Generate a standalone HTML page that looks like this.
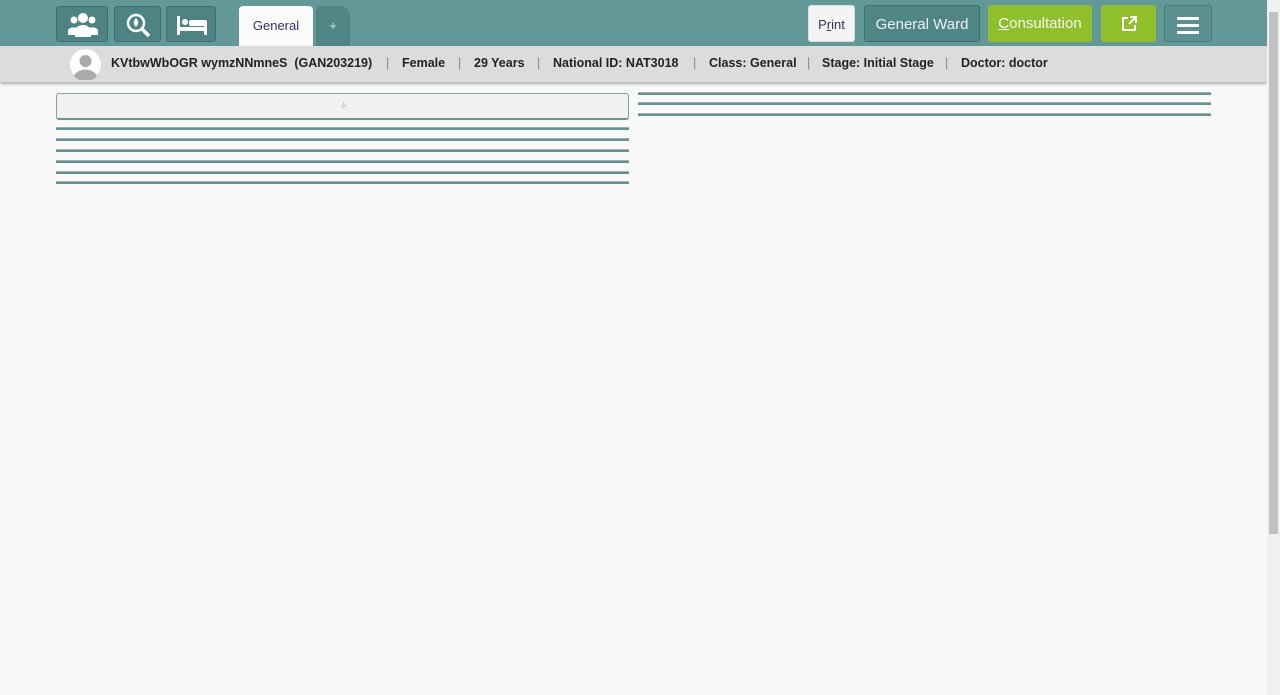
<!DOCTYPE html>
<html><head><style>
*{box-sizing:border-box;margin:0;padding:0}
body{width:1280px;height:695px;overflow:hidden;background:#f9f9f9;font-family:"Liberation Sans",sans-serif;position:relative}
.top{position:absolute;left:0;top:0;width:1267px;height:46px;background:#639898}
.ib{position:absolute;top:6px;width:52px;height:36px;background:#4e8383;border:1px solid #3f7070;border-radius:3px}
.tab{position:absolute;top:6px;height:40px;border-radius:4px 4px 0 0;font-size:13px;text-align:center;line-height:40px}
.btn{position:absolute;top:5px;height:37px;border-radius:3px;font-size:15px;line-height:37px;text-align:center;color:#eef}
.bar{position:absolute;left:0;top:46px;width:1267px;height:36px;background:#dcdcdc;box-shadow:0 2px 3px rgba(0,0,0,.3);font-size:12.5px;font-weight:bold;color:#222}
.bar span{position:absolute;top:10px;white-space:nowrap}
.sep{color:#888;font-weight:normal}
.ln{position:absolute;height:3px;border-top:1px solid #aaa;border-bottom:2px solid #5e9494}
.sb{position:absolute;right:0;top:0;width:13px;height:695px;background:#f0f0f0}
.sb div{position:absolute;left:2px;top:12px;width:9px;height:522px;background:#c1c1c1}
</style></head><body>
<div class="top">
<div class="ib" style="left:56px"><svg width="52" height="36" viewBox="0 0 52 36"><g fill="#fff"><circle cx="26" cy="11" r="5"/><circle cx="17" cy="13" r="3.5"/><circle cx="35" cy="13" r="3.5"/><path d="M18 30v-6a8 6 0 0 1 16 0v6z"/><path d="M11 28v-5a6 4 0 0 1 9-2v7z"/><path d="M41 28v-5a6 4 0 0 0-9-2v7z"/></g></svg></div>
<div class="ib" style="left:114px;width:47px"><svg width="47" height="36" viewBox="0 0 47 36"><circle cx="21" cy="16" r="8" fill="none" stroke="#fff" stroke-width="2.5"/><path d="M27 22l7 7" stroke="#fff" stroke-width="3.5"/><path d="M21 11c-3 4-3 6 0 9c3-3 3-5 0-9z" fill="#fff"/></svg></div>
<div class="ib" style="left:166px;width:50px"><svg width="50" height="36" viewBox="0 0 50 36"><g fill="#fff"><rect x="10" y="9" width="3" height="19"/><rect x="37" y="17" width="3" height="11"/><rect x="10" y="20" width="30" height="4"/><circle cx="18" cy="15" r="3"/><rect x="22" y="13" width="18" height="6" rx="2"/></g></svg></div>
<div class="tab" style="left:239px;width:74px;background:#fbfbfb;color:#336">General</div>
<div class="tab" style="left:316px;width:34px;background:#4f8585;color:#cde;border-radius:4px 10px 0 0">+</div>
<div class="btn" style="left:808px;width:47px;background:#f4f4f4;color:#335;font-size:13px;border:1px solid #ddd">P<u>r</u>int</div>
<div class="btn" style="left:864px;width:116px;background:#4f8585;border:1px solid #3f7070">General Ward</div>
<div class="btn" style="left:988px;width:104px;background:#8fc02c;color:#f4f4f4"><u style="color:#fff">C</u>onsultation</div>
<div class="btn" style="left:1101px;width:55px;background:#8fc02c;color:#fff"><svg width="20" height="20" viewBox="0 0 20 20" style="vertical-align:middle"><path d="M9 4H4v12h12v-5" fill="none" stroke="#fff" stroke-width="2"/><path d="M11 3h6v6M17 3l-7 7" fill="none" stroke="#fff" stroke-width="2"/></svg></div>
<div class="btn" style="left:1164px;width:48px;background:#5a9090;border:1px solid #477a7a"><svg width="22" height="18" viewBox="0 0 22 18" style="vertical-align:middle"><g fill="#fff"><rect y="1" width="22" height="3"/><rect y="8" width="22" height="3"/><rect y="15" width="22" height="3"/></g></svg></div>
</div>
<div class="bar">
<svg style="position:absolute;left:70px;top:3px" width="31" height="31" viewBox="0 0 31 31"><circle cx="15.5" cy="15.5" r="15.5" fill="#fff"/><circle cx="15.5" cy="12" r="6" fill="#aaa"/><path d="M4 27a12 9 0 0 1 23 0a15 15 0 0 1-23 0z" fill="#aaa"/></svg>
<span style="left:111px">KVtbwWbOGR wymzNNmneS &nbsp;(GAN203219)</span>
<span class="sep" style="left:386px">|</span><span style="left:402px">Female</span>
<span class="sep" style="left:458px">|</span><span style="left:474px">29 Years</span>
<span class="sep" style="left:537px">|</span><span style="left:553px">National ID: NAT3018</span>
<span class="sep" style="left:693px">|</span><span style="left:709px">Class: General</span>
<span class="sep" style="left:807px">|</span><span style="left:822px">Stage: Initial Stage</span>
<span class="sep" style="left:945px">|</span><span style="left:961px">Doctor: doctor</span>
</div>
<div style="position:absolute;left:56px;top:93px;width:573px;height:27px;background:#f1f1f1;border:1px solid #7aa3a3;border-bottom:2px solid #6a9494;border-radius:3px"><span style="position:absolute;left:283px;top:7px;font-size:9px;color:#555">⁘</span></div>
<div class="ln" style="left:56px;width:573px;top:127px"></div>
<div class="ln" style="left:56px;width:573px;top:138px"></div>
<div class="ln" style="left:56px;width:573px;top:149px"></div>
<div class="ln" style="left:56px;width:573px;top:160px"></div>
<div class="ln" style="left:56px;width:573px;top:171px"></div>
<div class="ln" style="left:56px;width:573px;top:181px"></div>
<div class="ln" style="left:638px;width:573px;top:92px"></div>
<div class="ln" style="left:638px;width:573px;top:102px"></div>
<div class="ln" style="left:638px;width:573px;top:113px"></div>
<div class="sb"><div></div></div>
</body></html>
